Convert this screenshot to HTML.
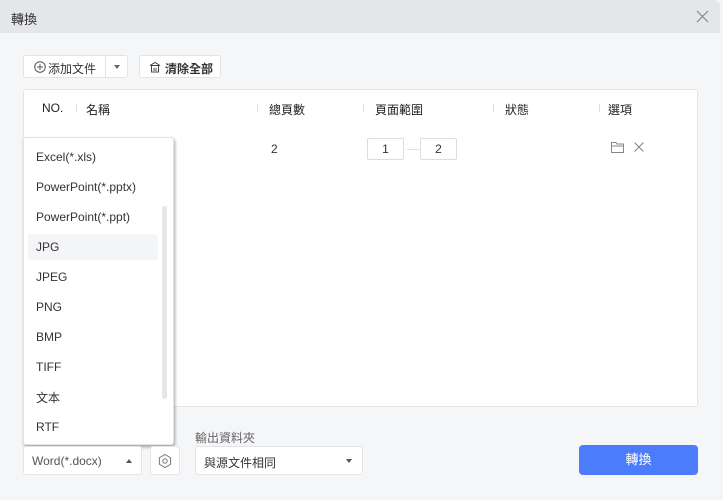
<!DOCTYPE html>
<html><head><meta charset="utf-8"><style>
*{box-sizing:border-box;margin:0;padding:0}
body{width:723px;height:500px;background:#f3f4f6;font-family:"Liberation Sans","Noto Sans CJK TC",sans-serif;font-size:12px;color:#333;position:relative;overflow:hidden}
.dlg{position:absolute;left:0;top:0;width:720px;height:497px;background:#f5f6f8;border-radius:0 6px 0 0;overflow:hidden}
.hdr{position:absolute;left:0;top:0;width:720px;height:33px;background:#e5e6ea;border-radius:0 6px 0 0}
.hdr .t{position:absolute;left:11px;top:9px;font-size:13px;color:#333}
.abs{position:absolute}
.btn{position:absolute;background:#fff;border:1px solid #e3e4e8;border-radius:3px}
.tbl{position:absolute;left:23px;top:89px;width:675px;height:318px;background:#fff;border:1px solid #e3e4e8;border-radius:3px}
.th{position:absolute;top:11px;font-size:12px;color:#222}
.sep{position:absolute;top:14px;width:1px;height:8px;background:#ddd}
.pg{position:absolute;top:48px;width:37px;height:22px;border:1px solid #dcdde2;border-radius:2px;background:#fff;text-align:center;line-height:20px;font-size:12px}
.dd{position:absolute;left:23px;top:137px;width:151px;height:308px;background:#fff;border:1px solid #e3e4e8;border-radius:3px;box-shadow:1px 2px 3px rgba(0,0,0,.35)}
.it{position:absolute;left:12px;font-size:12px;color:#333}
.sel{position:absolute;background:#fff;border:1px solid #e3e4e8;border-radius:3px;top:446px;height:29px}
</style></head><body>
<div class="dlg">
<div class="hdr"><span class="t">轉換</span>
<svg class="abs" style="left:696px;top:10px" width="13" height="13" viewBox="0 0 13 13"><path d="M1 1L12 12M12 1L1 12" stroke="#888" stroke-width="1.2"/></svg></div>

<div class="btn" style="left:23px;top:55px;width:105px;height:23px"></div>
<div class="abs" style="left:105px;top:56px;width:1px;height:21px;background:#e3e4e8"></div>
<svg class="abs" style="left:34px;top:61px" width="12" height="12" viewBox="0 0 12 12"><circle cx="6" cy="6" r="5.3" fill="none" stroke="#555"/><path d="M6 3v6M3 6h6" stroke="#555"/></svg>
<span class="abs" style="left:48px;top:60px;font-size:12px">添加文件</span>
<svg class="abs" style="left:114px;top:65px" width="6" height="4"><path d="M0 0h6L3 4z" fill="#666"/></svg>
<div class="btn" style="left:139px;top:55px;width:82px;height:23px"></div>
<svg class="abs" style="left:149px;top:61px" width="12" height="12" viewBox="0 0 12 12"><path d="M1 4.5L6 1.5L11 4.5M2.5 4.5V11H9.5V4.5M1.5 4.5H10.5M5 7V10M7 7V10" fill="none" stroke="#444"/></svg>
<span class="abs" style="left:165px;top:60px;font-size:12px;font-weight:bold;color:#333">清除全部</span>

<div class="tbl">
<span class="th" style="left:18px">NO.</span><div class="sep" style="left:52px"></div>
<span class="th" style="left:62px">名稱</span><div class="sep" style="left:233px"></div>
<span class="th" style="left:245px">總頁數</span><div class="sep" style="left:339px"></div>
<span class="th" style="left:351px">頁面範圍</span><div class="sep" style="left:469px"></div>
<span class="th" style="left:481px">狀態</span><div class="sep" style="left:575px"></div>
<span class="th" style="left:584px">選項</span>
<span class="abs" style="left:247px;top:52px;font-size:12px">2</span>
<div class="pg" style="left:343px">1</div>
<div class="abs" style="left:383px;top:59px;width:12px;height:1px;background:#ddd"></div>
<div class="pg" style="left:396px">2</div>
<svg class="abs" style="left:587px;top:52px" width="13" height="11" viewBox="0 0 13 11"><path d="M.5 .5H5L6 2H12.5V10.5H.5Z M.5 4H12.5" fill="none" stroke="#888"/></svg>
<svg class="abs" style="left:610px;top:52px" width="10" height="10" viewBox="0 0 10 10"><path d="M.5 .5L9.5 9.5M9.5 .5L.5 9.5" stroke="#888" stroke-width="1.1"/></svg>
</div>

<div class="dd">
<div class="abs" style="left:4px;top:96px;width:130px;height:26px;background:#f4f5f7;border-radius:3px"></div>
<div class="abs" style="left:138px;top:68px;width:5px;height:193px;background:#e5e6ea;border-radius:3px"></div>
<span class="it" style="top:12px">Excel(*.xls)</span>
<span class="it" style="top:42px">PowerPoint(*.pptx)</span>
<span class="it" style="top:72px">PowerPoint(*.ppt)</span>
<span class="it" style="top:102px">JPG</span>
<span class="it" style="top:132px">JPEG</span>
<span class="it" style="top:162px">PNG</span>
<span class="it" style="top:192px">BMP</span>
<span class="it" style="top:222px">TIFF</span>
<span class="it" style="top:251px">文本</span>
<span class="it" style="top:282px">RTF</span>
</div>

<div class="sel" style="left:23px;width:119px"><span class="abs" style="left:8px;top:7px;color:#555">Word(*.docx)</span>
<svg class="abs" style="left:102px;top:12px" width="6" height="4"><path d="M0 4h6L3 0z" fill="#555"/></svg></div>
<div class="sel" style="left:150px;width:30px"><svg class="abs" style="left:6px;top:6px" width="16" height="16" viewBox="0 0 16 16"><path d="M8 1.5L13.6 4.75V11.25L8 14.5L2.4 11.25V4.75Z" fill="none" stroke="#777"/><circle cx="8" cy="8" r="2.2" fill="none" stroke="#777"/></svg></div>
<span class="abs" style="left:195px;top:429px;color:#666;font-size:12px">輸出資料夾</span>
<div class="sel" style="left:195px;width:168px"><span class="abs" style="left:8px;top:7px;color:#333">與源文件相同</span>
<svg class="abs" style="left:150px;top:12px" width="6" height="4"><path d="M0 0h6L3 4z" fill="#555"/></svg></div>
<div class="abs" style="left:579px;top:445px;width:119px;height:30px;background:#4a7cfb;border-radius:4px;color:#fff;text-align:center;line-height:30px;font-size:13px">轉換</div>
</div>
</body></html>
